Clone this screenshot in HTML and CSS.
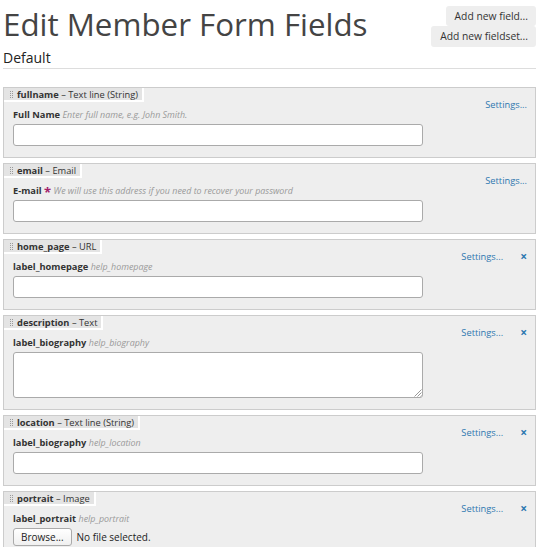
FILE: index.html
```html
<!DOCTYPE html>
<html>
<head>
<meta charset="utf-8">
<link rel="stylesheet" href="styles.css">
</head>
<body>
<div class="page">
  <div class="head">
    <div class="head-text">
      <h1 class="title">Edit Member Form Fields</h1>
      <h2 class="subtitle">Default</h2>
    </div>
    <div class="head-buttons">
      <span class="btn btn-field">Add new field...</span>
      <span class="btn btn-set">Add new fieldset...</span>
    </div>
  </div>
  <div class="rule"></div>

  <div class="field">
    <div class="main">
      <div class="tab"><svg class="grip" width="3" height="7" viewBox="0 0 3 7"><g fill="#999"><rect x="0" y="0" width="1" height="1"/><rect x="2" y="0" width="1" height="1"/><rect x="0" y="2" width="1" height="1"/><rect x="2" y="2" width="1" height="1"/><rect x="0" y="4" width="1" height="1"/><rect x="2" y="4" width="1" height="1"/><rect x="0" y="6" width="1" height="1"/><rect x="2" y="6" width="1" height="1"/></g></svg><b>fullname</b> – Text line (String)</div>
      <div class="content">
        <div class="label"><b>Full Name</b> <i class="help">Enter full name, e.g. John Smith.</i></div>
        <div class="input"></div>
      </div>
    </div>
    <div class="actions"><a class="settings">Settings...</a></div>
  </div>

  <div class="field">
    <div class="main">
      <div class="tab"><svg class="grip" width="3" height="7" viewBox="0 0 3 7"><g fill="#999"><rect x="0" y="0" width="1" height="1"/><rect x="2" y="0" width="1" height="1"/><rect x="0" y="2" width="1" height="1"/><rect x="2" y="2" width="1" height="1"/><rect x="0" y="4" width="1" height="1"/><rect x="2" y="4" width="1" height="1"/><rect x="0" y="6" width="1" height="1"/><rect x="2" y="6" width="1" height="1"/></g></svg><b>email</b> – Email</div>
      <div class="content">
        <div class="label"><b>E-mail</b> <span class="req">*</span> <i class="help">We will use this address if you need to recover your password</i></div>
        <div class="input"></div>
      </div>
    </div>
    <div class="actions"><a class="settings">Settings...</a></div>
  </div>

  <div class="field">
    <div class="main">
      <div class="tab"><svg class="grip" width="3" height="7" viewBox="0 0 3 7"><g fill="#999"><rect x="0" y="0" width="1" height="1"/><rect x="2" y="0" width="1" height="1"/><rect x="0" y="2" width="1" height="1"/><rect x="2" y="2" width="1" height="1"/><rect x="0" y="4" width="1" height="1"/><rect x="2" y="4" width="1" height="1"/><rect x="0" y="6" width="1" height="1"/><rect x="2" y="6" width="1" height="1"/></g></svg><b>home_page</b> – URL</div>
      <div class="content">
        <div class="label"><b>label_homepage</b> <i class="help">help_homepage</i></div>
        <div class="input"></div>
      </div>
    </div>
    <div class="actions"><a class="settings">Settings...</a><a class="remove">×</a></div>
  </div>

  <div class="field">
    <div class="main">
      <div class="tab"><svg class="grip" width="3" height="7" viewBox="0 0 3 7"><g fill="#999"><rect x="0" y="0" width="1" height="1"/><rect x="2" y="0" width="1" height="1"/><rect x="0" y="2" width="1" height="1"/><rect x="2" y="2" width="1" height="1"/><rect x="0" y="4" width="1" height="1"/><rect x="2" y="4" width="1" height="1"/><rect x="0" y="6" width="1" height="1"/><rect x="2" y="6" width="1" height="1"/></g></svg><b>description</b> – Text</div>
      <div class="content">
        <div class="label"><b>label_biography</b> <i class="help">help_biography</i></div>
        <div class="input textarea"><svg class="resize" width="9" height="9" viewBox="0 0 9 9"><path d="M8.5 1.5 L1.5 8.5 M8.5 4.5 L4.5 8.5 M8.5 7.5 L7.5 8.5" stroke="#999" stroke-width="1"/></svg></div>
      </div>
    </div>
    <div class="actions"><a class="settings">Settings...</a><a class="remove">×</a></div>
  </div>

  <div class="field">
    <div class="main">
      <div class="tab"><svg class="grip" width="3" height="7" viewBox="0 0 3 7"><g fill="#999"><rect x="0" y="0" width="1" height="1"/><rect x="2" y="0" width="1" height="1"/><rect x="0" y="2" width="1" height="1"/><rect x="2" y="2" width="1" height="1"/><rect x="0" y="4" width="1" height="1"/><rect x="2" y="4" width="1" height="1"/><rect x="0" y="6" width="1" height="1"/><rect x="2" y="6" width="1" height="1"/></g></svg><b>location</b> – Text line (String)</div>
      <div class="content">
        <div class="label"><b>label_biography</b> <i class="help">help_location</i></div>
        <div class="input"></div>
      </div>
    </div>
    <div class="actions"><a class="settings">Settings...</a><a class="remove">×</a></div>
  </div>

  <div class="field">
    <div class="main">
      <div class="tab"><svg class="grip" width="3" height="7" viewBox="0 0 3 7"><g fill="#999"><rect x="0" y="0" width="1" height="1"/><rect x="2" y="0" width="1" height="1"/><rect x="0" y="2" width="1" height="1"/><rect x="2" y="2" width="1" height="1"/><rect x="0" y="4" width="1" height="1"/><rect x="2" y="4" width="1" height="1"/><rect x="0" y="6" width="1" height="1"/><rect x="2" y="6" width="1" height="1"/></g></svg><b>portrait</b> – Image</div>
      <div class="content">
        <div class="label"><b>label_portrait</b> <i class="help">help_portrait</i></div>
        <div class="file"><span class="browse">Browse...</span><span class="nofile">No file selected.</span></div>
      </div>
    </div>
    <div class="actions"><a class="settings">Settings...</a><a class="remove">×</a></div>
  </div>
</div>
</body>
</html>
```
FILE: styles.css
```css
html, body {
  margin: 0;
  padding: 0;
  background: #fff;
}
body {
  font-family: "Open Sans", "DejaVu Sans", sans-serif;
  color: #333;
  overflow: hidden;
}
.page {
  padding: 0 6px 0 3px;
}
.head {
  display: flex;
  justify-content: space-between;
  align-items: flex-start;
}
.head-text {
  white-space: nowrap;
}
.title {
  margin: 4px 0 0;
  font-size: 31.3px;
  font-weight: 400;
  line-height: 40px;
  color: #444;
}
.subtitle {
  margin: 5px 0 0;
  font-size: 14px;
  font-weight: 400;
  line-height: 18px;
  color: #222;
}
.head-buttons {
  display: flex;
  flex-direction: column;
  align-items: flex-end;
  padding-top: 6px;
  white-space: nowrap;
}
.btn {
  display: block;
  background: #eee;
  border-radius: 3px;
  font-size: 10.3px;
  line-height: 20px;
  height: 20px;
  color: #333;
  padding: 0 8px 0 9px;
}
.btn-set {
  height: 21px;
  line-height: 21px;
}
.rule {
  height: 1px;
  background: #ddd;
  margin: 1px 0 18px;
}
.field {
  display: flex;
  border: 1px solid #ccc;
  background: #eee;
  margin-bottom: 5px;
  font-size: 9.3px;
}
.main {
  flex: 1;
  padding-bottom: 11px;
}
.tab {
  display: flex;
  width: max-content;
  align-items: center;
  background: #e4e4e4;
  border-right: 2px solid #fff;
  border-bottom: 2px solid #fff;
  line-height: 12px;
  height: 12px;
  padding: 1px 4px 0 6px;
  box-sizing: content-box;
  height: 11px;
  color: #333;
  white-space: pre;
}
.tab b {
  font-weight: 700;
}
.grip {
  display: block;
  margin-right: 4px;
}
.content {
  padding: 6px 0 0 9px;
}
.label {
  line-height: 14px;
  height: 14px;
  color: #333;
  white-space: nowrap;
}
.label b {
  font-weight: 700;
}
.help {
  color: #999;
  font-size: 8.9px;
}
.req {
  color: #a2216c;
  font-weight: 700;
  font-size: 13px;
  line-height: 10px;
  vertical-align: -3px;
}
.input {
  box-sizing: border-box;
  width: 410px;
  height: 22px;
  margin-top: 2px;
  background: #fff;
  border: 1px solid #aaa;
  border-radius: 3px;
  position: relative;
}
.textarea {
  height: 46px;
}
.resize {
  position: absolute;
  right: 0;
  bottom: 0;
}
.file {
  display: flex;
  align-items: center;
  height: 18px;
  margin-top: 2px;
}
.browse {
  box-sizing: border-box;
  display: inline-block;
  border: 1px solid #aaa;
  border-radius: 3px;
  background: linear-gradient(#fff, #f0f0f0);
  line-height: 16px;
  height: 18px;
  padding: 0 7px;
  color: #222;
  font-size: 10px;
}
.nofile {
  margin-left: 5px;
  color: #222;
  font-size: 10px;
}
.actions {
  display: flex;
  align-items: flex-start;
  padding: 11px 8px 0 0;
}
.settings {
  color: #2e78b0;
  line-height: 12px;
}
.remove {
  color: #2e78b0;
  font-weight: 700;
  font-size: 12px;
  line-height: 11px;
  margin-left: 17px;
}
```
